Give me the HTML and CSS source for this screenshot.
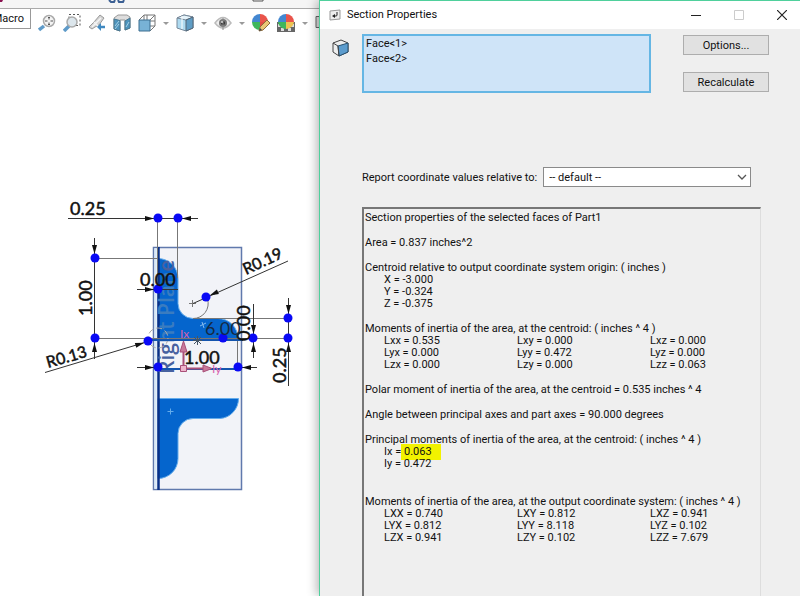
FILE: index.html
```html
<!DOCTYPE html>
<html lang="en">
<head>
	<meta charset="utf-8">
	<meta name="viewport" content="width=device-width, initial-scale=1">
	<title>Section Properties</title>
	<link rel="stylesheet" href="styles.css">
</head>
<body>

<main class="workspace">
	<div class="ribbon">
		<svg width="320" height="8" viewBox="0 0 320 8">
			<path d="M0 0h3l-1 2H0z" fill="#8a1250"/>
			<path d="M109 0l2 2h3l1-2M118 0l1 2h4l1-2" fill="none" stroke="#3b5f93" stroke-width="2"/>
			<path d="M253 0v1h10V0" fill="none" stroke="#555"/>
		</svg>
	</div>

	<div class="toolbar">
		<button class="macro"><span>Macro</span></button>
		<div class="icons">
			<button class="tool" aria-label="Zoom to fit">
				<svg viewBox="0 0 18 18">
					<path d="M1 16l5-4" stroke="#5f9bc9" stroke-width="3.500"/>
					<circle cx="11" cy="7" r="5.500" fill="#f4f4f4" stroke="#aaa" stroke-width="1.500"/>
					<path d="M11 3v2.500M11 8.500V11M7 7h2.500M12.500 7H15M10 4l1-1 1 1M10 10l1 1 1-1" fill="none" stroke="#555"/>
				</svg>
			</button>
			<button class="tool" aria-label="Zoom to area">
				<svg viewBox="0 0 18 18">
					<path d="M6 0.500h11v11H6z" fill="none" stroke="#555" stroke-dasharray="2 2"/>
					<path d="M1 17l5-5" stroke="#5f9bc9" stroke-width="3.500"/>
					<circle cx="9" cy="8" r="5" fill="#dce6ec" stroke="#aaa" stroke-width="1.500"/>
				</svg>
			</button>
			<button class="tool" aria-label="Previous view">
				<svg viewBox="0 0 18 18">
					<path d="M1 13l5-5 6-7 4 3-5 7-4 2-3 2z" fill="#d4d4d4" stroke="#999"/>
					<path d="M6 8l4 4M4 13l9-9" stroke="#f4f4f4" stroke-width="1.500"/>
					<path d="M17 13h-5" stroke="#4089c0" stroke-width="2.500"/>
					<path d="M9 13l4-4v8z" fill="#4089c0"/>
				</svg>
			</button>
			<button class="tool" aria-label="Section view">
				<svg viewBox="0 0 18 18">
					<path d="M1 4l4-3h9l3 2v11l-5 2V6H7v11l-6-2z" fill="#ddd" stroke="#999"/>
					<path d="M1 5l6 1.500V17l-6-2zM12 7l5-3v10l-5 2z" fill="#4e94bd" stroke="#4b7890"/>
					<path d="M2 12l4-5M2 15l4-5M13 13l3-5" stroke="#a7d1e5"/>
				</svg>
			</button>
			<button class="tool" aria-label="View orientation">
				<svg viewBox="0 0 18 18">
					<path d="M1 6l5-5h11v11l-5 5M6 1v11h11M1 17l5-5M9 1v5M17 7h-5M12 6l5-5" fill="none" stroke="#777"/>
					<path d="M1 6h11v11H1z" fill="#78b2d6" stroke="#3d6f90"/>
				</svg>
				<i class="caret"></i>
			</button>
			<button class="tool" aria-label="Display style">
				<svg viewBox="0 0 18 18">
					<path d="M1 4l7-3 9 2v11l-7 3-9-3z" fill="#aedaf0" stroke="#789"/>
					<path d="M1 4l7-3 9 2-7 3z" fill="#e4f3fa" stroke="#789"/>
					<path d="M10 6l7-3v11l-7 3z" fill="#5f9dc5" stroke="#567"/>
					<path d="M6 2v13" stroke="#fff"/>
				</svg>
				<i class="caret"></i>
			</button>
			<button class="tool" aria-label="Hide or show items">
				<svg viewBox="0 0 18 18">
					<path d="M1 9q8-11 16 0-8 10-16 0z" fill="#eee" stroke="#bbb" stroke-width="1.500"/>
					<circle cx="9" cy="9" r="4" fill="#777"/>
					<circle cx="9" cy="9" r="2" fill="#333"/>
					<path d="M9 4v12" stroke="#888"/>
					<circle cx="8" cy="8" r="1" fill="#ddd"/>
				</svg>
				<i class="caret"></i>
			</button>
			<button class="tool" aria-label="Edit appearance">
				<svg viewBox="0 0 18 18">
					<path d="M8 8V0a8 8 0 0 0-8 8z" fill="#4387d1"/>
					<path d="M8 8h8a8 8 0 0 0-8-8z" fill="#e9544b"/>
					<path d="M8 8H0a8 8 0 0 0 8 8z" fill="#3eb65c"/>
					<path d="M8 8v8a8 8 0 0 0 8-8z" fill="#e24b43"/>
					<path d="M7 17l1-4 7-7 3 3-7 7z" fill="#e9c776" stroke="#8d6c3d"/>
					<path d="M7 17l1-3 2 2z" fill="#444"/>
				</svg>
			</button>
			<button class="tool" aria-label="Apply scene">
				<svg viewBox="0 0 18 18">
					<path d="M0 8h18v10H0z" fill="#666"/>
					<path d="M1 10h3v3H1zM14 10h3v3h-3zM4 14h3v3H4zM11 14h3v3h-3z" fill="#ddd"/>
					<path d="M9 8V0a8 8 0 0 0-8 8z" fill="#4387d1"/>
					<path d="M9 8h8a8 8 0 0 0-8-8z" fill="#e9544b"/>
					<path d="M9 8H1a8 8 0 0 0 8 7z" fill="#3eb65c"/>
					<path d="M9 8v7a8 8 0 0 0 8-7z" fill="#edc352"/>
				</svg>
				<i class="caret"></i>
			</button>
			<button class="tool" aria-label="View settings">
				<svg viewBox="0 0 18 18">
					<path d="M1 2.500h16v11H1z" fill="#ddd" stroke="#666"/>
				</svg>
			</button>
		</div>
	</div>

	<svg class="sketch" viewBox="0 40 320 556" width="320" height="556">
		<defs>
			<marker id="arrow" markerWidth="9" markerHeight="6" refX="13" refY="3" orient="auto" markerUnits="userSpaceOnUse" overflow="visible">
				<path d="M0 0.500L9 3L0 5.500z" fill="#111"/>
			</marker>
		</defs>

		<!-- right plane -->
		<path d="M153.500 247.500H241.500V489.500H153.500z" fill="#f2f3f8" stroke="#6079ad" stroke-width="1.500"/>
		<path d="M155.500 248V489" stroke="#d7e9f8" stroke-width="2"/>

		<!-- section faces -->
		<g fill="#0565cd" stroke="#64aceb">
			<path d="M158 258.500A20 20 0 0 1 178 278.500V303.500A15 15 0 0 0 193 318.500H218A20 20 0 0 1 238 338.500H158z"/>
			<path d="M158 398.500H238.500A20 20 0 0 1 220 418.500H193A15 15 0 0 0 178 433.500V458.500A20 20 0 0 1 158 478.500z"/>
		</g>
		<path d="M158.500 247V490" stroke="#082f86" stroke-width="2.500"/>
		<path d="M167.500 411.500h6M170.500 408.500v6" stroke="#64aceb"/>

		<g class="plane-label" transform="translate(174 374) rotate(-90)">
			<text><tspan class="rig">Rig</tspan><tspan class="faded">ht Plan</tspan><tspan class="rig">e</tspan></text>
		</g>

		<!-- extension lines -->
		<g fill="none" stroke="#777">
			<path d="M95 258.500H158M95 338.500H288M193 318.500H288M237.500 339V368M157.500 218V289M177.500 218V278"/>
			<circle cx="158" cy="338" r="10" stroke="#aaa" stroke-dasharray="6 3"/>
			<path d="M207.500 299A15 15 0 0 1 193 318.500M189 303.500h7M192.500 300v7"/>
			<path d="M200 326l6-3M202 322l2 6" stroke="#84b9ec"/>
		</g>
		<path d="M148 340H243M158 369H239" stroke="#1454ad" stroke-width="2"/>
		<path d="M193 340.500h9M197.500 336v9M194 337l7 7M201 337l-7 7" stroke="#456"/>

		<!-- dimension lines -->
		<g fill="none" stroke="#333">
			<path d="M68 218.500H198M94.500 238V359M45 372.500L148 341.500M137 289.500H178"/>
			<path d="M193 303.500L288 261M288.500 298V386M253.500 304V358M137 367.500H158M238 367.500H257"/>
		</g>
		<g fill="none" stroke="none" marker-end="url(#arrow)">
			<path d="M140 218.500H158"/><path d="M198 218.500H178"/>
			<path d="M94.500 238V258"/><path d="M94.500 359V339"/>
			<path d="M120 350L148 341.500"/><path d="M137 289.500H158"/>
			<path d="M240 282L206 297"/>
			<path d="M288.500 298V318"/><path d="M288.500 359V339"/>
			<path d="M253.500 318V338"/><path d="M253.500 359V339"/>
			<path d="M137 367.500H158"/><path d="M257 367.500H238"/>
		</g>
		<g fill="#0909f5">
			<circle cx="158" cy="218" r="4.500"/><circle cx="178" cy="218" r="4.500"/>
			<circle cx="95" cy="258" r="4.500"/><circle cx="95" cy="338" r="4.500"/>
			<circle cx="148" cy="341" r="4.500"/><circle cx="158" cy="289" r="4.500"/>
			<circle cx="206" cy="297" r="4.500"/><circle cx="223" cy="338" r="4.500"/>
			<circle cx="253" cy="338" r="4.500"/><circle cx="288" cy="318" r="4.500"/>
			<circle cx="288" cy="338" r="4.500"/><circle cx="158" cy="367" r="4.500"/>
			<circle cx="238" cy="367" r="4.500"/>
		</g>

		<!-- principal axes -->
		<g fill="#c8799a" stroke="#a94f78">
			<path d="M183.500 368V350M184 368.500H204" stroke-width="2"/>
			<path d="M180 352l3.500-11 3.500 11zM203 365l9 3.500-9 3.500z"/>
			<path d="M180.500 365.500h6v6h-6z" fill="#edb5cc"/>
		</g>
		<g class="axis">
			<text x="180" y="338">Ix</text>
			<text x="212" y="373">Iy</text>
		</g>

		<g class="dim">
			<text x="70" y="215">0.25</text>
			<text x="140" y="286">0.00</text>
			<text x="184" y="364">1.00</text>
			<text transform="translate(92 316) rotate(-90)">1.00</text>
			<text transform="translate(286 383) rotate(-90)">0.25</text>
			<text transform="translate(250 341) rotate(-90)">0.00</text>
			<text class="radius" transform="translate(48 368) rotate(-16)">R0.13</text>
			<text class="radius" transform="translate(246 275) rotate(-25)">R0.19</text>
			<text class="thin" x="205" y="335">6.00</text>
		</g>
	</svg>
</main>

<section class="dialog">
	<header class="titlebar">
		<svg class="app-icon" viewBox="0 0 12 12">
			<path d="M1 2l10-1v9L1 11z" fill="#eee" stroke="#999"/>
			<path d="M8 3v3q0 1-1 1H5" fill="none" stroke="#222"/>
			<path d="M3 7l3-2v4z" fill="#222"/>
		</svg>
		<h1>Section Properties</h1>
		<div class="window-buttons">
			<button aria-label="Minimize"><svg viewBox="0 0 10 10"><path d="M0 5.500h10" stroke="#222"/></svg></button>
			<button aria-label="Maximize" disabled><svg viewBox="0 0 10 10"><path d="M0.500 0.500h9v9h-9z" fill="none" stroke="#ccc"/></svg></button>
			<button aria-label="Close"><svg viewBox="0 0 10 10"><path d="M0 0l10 10M10 0L0 10" stroke="#222" stroke-width="1.200"/></svg></button>
		</div>
	</header>

	<div class="content">
		<div class="selection">
			<svg class="face-icon" viewBox="0 0 18 18">
				<path d="M1 4l8-3 7 3v9l-9 4-6-4z" fill="#eee" stroke="#444"/>
				<path d="M6 7l10-3v9l-9 4z" fill="#5c9ccd" stroke="#28516f"/>
				<path d="M1 4l5 3 1 10" fill="none" stroke="#444"/>
			</svg>
			<select class="faces" multiple size="3" aria-label="Selected faces">
				<option>Face&lt;1&gt;</option>
				<option>Face&lt;2&gt;</option>
			</select>
			<div class="actions">
				<button class="btn">Options...</button>
				<button class="btn">Recalculate</button>
			</div>
		</div>

		<div class="relative-to">
			<label for="coord">Report coordinate values relative to:</label>
			<div class="dropdown">
				<select id="coord">
					<option>-- default --</option>
				</select>
				<svg viewBox="0 0 10 6"><path d="M1 1l4 4 4-4" fill="none" stroke="#555" stroke-width="1.300"/></svg>
			</div>
		</div>

		<div class="report">
			<p>Section properties of the selected faces of Part1</p>
			<p>Area = 0.837 inches^2</p>
			<div class="block">
				<p>Centroid relative to output coordinate system origin: ( inches )</p>
				<div class="values">
					<span>X = -3.000</span>
					<span>Y = -0.324</span>
					<span>Z = -0.375</span>
				</div>
			</div>
			<div class="block">
				<p>Moments of inertia of the area, at the centroid: ( inches ^ 4 )</p>
				<div class="values matrix">
					<span>Lxx = 0.535</span><span>Lxy = 0.000</span><span>Lxz = 0.000</span>
					<span>Lyx = 0.000</span><span>Lyy = 0.472</span><span>Lyz = 0.000</span>
					<span>Lzx = 0.000</span><span>Lzy = 0.000</span><span>Lzz = 0.063</span>
				</div>
			</div>
			<p>Polar moment of inertia of the area, at the centroid = 0.535 inches ^ 4</p>
			<p>Angle between principal axes and part axes = 90.000 degrees</p>
			<div class="block">
				<p>Principal moments of inertia of the area, at the centroid: ( inches ^ 4 )</p>
				<div class="values">
					<span>Ix = <mark>0.063</mark></span>
					<span>Iy = 0.472</span>
				</div>
			</div>
			<div class="block output">
				<p>Moments of inertia of the area, at the output coordinate system: ( inches ^ 4 )</p>
				<div class="values matrix">
					<span>LXX = 0.740</span><span>LXY = 0.812</span><span>LXZ = 0.941</span>
					<span>LYX = 0.812</span><span>LYY = 8.118</span><span>LYZ = 0.102</span>
					<span>LZX = 0.941</span><span>LZY = 0.102</span><span>LZZ = 7.679</span>
				</div>
			</div>
		</div>
	</div>
</section>

</body>
</html>
```
FILE: styles.css
```css
* {
	box-sizing: border-box;
	margin: 0;
	padding: 0;
}
body {
	display: flex;
	min-height: 100vh;
	background: #fff;
	color: #111;
	font: 11px/12px Roboto, "Open Sans", sans-serif;
}
button,
select {
	font: inherit;
	color: inherit;
}
svg {
	display: block;
}

/* model window */
.workspace {
	flex: 0 0 40%;
	min-width: 0;
	height: 100vh;
	overflow: hidden;
}
.ribbon {
	height: 9px;
	background: #f5f5f5;
	border-bottom: 1px solid #aaa;
	overflow: hidden;
}
.toolbar {
	display: flex;
	align-items: flex-start;
	height: 31px;
}
.macro {
	display: flex;
	justify-content: flex-end;
	flex: 0 0 31px;
	height: 20px;
	padding-right: 6px;
	overflow: hidden;
	background: #fff;
	border: solid #999;
	border-width: 0 1px 1px 0;
	line-height: 20px;
}
.icons {
	display: flex;
	gap: 7px;
	padding: 5px 0 0 7px;
}
.tool {
	display: flex;
	align-items: center;
	gap: 7px;
	border: none;
	background: none;
}
.tool svg {
	width: 18px;
	height: 18px;
}
.caret {
	border: solid transparent;
	border-width: 3px 3px 0;
	border-top-color: #999;
}
.sketch text {
	font-family: Lato, sans-serif;
}
.dim text {
	font-size: 18px;
	fill: #111;
	stroke: #111;
	stroke-width: 0.5px;
}
.dim .radius {
	font-size: 16px;
}
.dim .thin {
	stroke: none;
	fill: #152a44;
}
.axis text {
	font-size: 12px;
	fill: #d85fae;
}
.plane-label text {
	font: 600 21px "Open Sans", sans-serif;
}
.rig {
	fill: #4761a0;
}
.faded {
	fill: #3a7cc0;
}

/* dialog */
.dialog {
	flex: 1;
	display: flex;
	flex-direction: column;
	position: relative;
	margin-left: -1px;
	background: #efefef;
	border: solid #4fd09c;
	border-width: 1px 0 0 1px;
	box-shadow: -2px 0 10px rgba(0, 0, 0, 0.3);
}
.titlebar {
	display: flex;
	align-items: center;
	height: 28px;
	padding: 0 13px 0 9px;
	background: #fff;
}
.app-icon {
	width: 12px;
	height: 12px;
}
.titlebar h1 {
	flex: 1;
	padding-left: 6px;
	font-size: 11px;
	font-weight: 400;
}
.window-buttons {
	display: flex;
	gap: 33px;
}
.window-buttons button {
	border: none;
	background: none;
}
.window-buttons svg {
	width: 10px;
	height: 10px;
}
.content {
	flex: 1;
	display: flex;
	flex-direction: column;
	padding: 5px 31px 0 42px;
}
.selection {
	display: flex;
	gap: 32px;
	height: 59px;
}
.face-icon {
	flex: none;
	width: 18px;
	height: 18px;
	margin: 5px -20px 0 -30px;
}
.faces {
	flex: 1;
	min-width: 0;
	padding: 1px 0;
	overflow: hidden;
	background: #cfe4f8;
	border: 2px solid #65b6e4;
	border-radius: 0;
	outline: none;
}
.faces option {
	min-height: 15px;
	padding: 0 2px;
	line-height: 15px;
}
.actions {
	display: flex;
	flex-direction: column;
	justify-content: space-between;
	width: 86px;
	padding: 1px 0;
}
.btn {
	height: 20px;
	padding-top: 1px;
	background: #e1e1e1;
	border: 1px solid #adadad;
}
.relative-to {
	display: flex;
	align-items: center;
	gap: 6px;
	margin: 74px 18px 0 0;
}
.relative-to label {
	padding-top: 1px;
	white-space: nowrap;
}
.dropdown {
	flex: 1;
	display: grid;
	align-items: center;
}
.dropdown select,
.dropdown svg {
	grid-area: 1 / 1;
}
.dropdown select {
	appearance: none;
	width: 100%;
	height: 20px;
	padding: 1px 5px 0;
	background: #fff;
	border: 1px solid #8a8a8a;
	border-radius: 0;
}
.dropdown svg {
	justify-self: end;
	width: 10px;
	height: 6px;
	margin-right: 4px;
	pointer-events: none;
}
.report {
	flex: 1;
	display: flex;
	flex-direction: column;
	gap: 13px;
	margin: 20px 8px 0 0;
	padding: 3px 0 0 1px;
	border: solid #777;
	border-width: 2px 1px 0 2px;
	border-right-color: #ddd;
	white-space: nowrap;
}
.values {
	display: grid;
	padding-left: 19px;
}
.matrix {
	grid-template-columns: repeat(3, 1fr);
	margin-right: -23px;
}
.output {
	margin-top: 13px;
}
mark {
	padding: 1px 9px 2px 3px;
	margin-left: -3px;
	background: #f2f200;
	color: inherit;
}
```
